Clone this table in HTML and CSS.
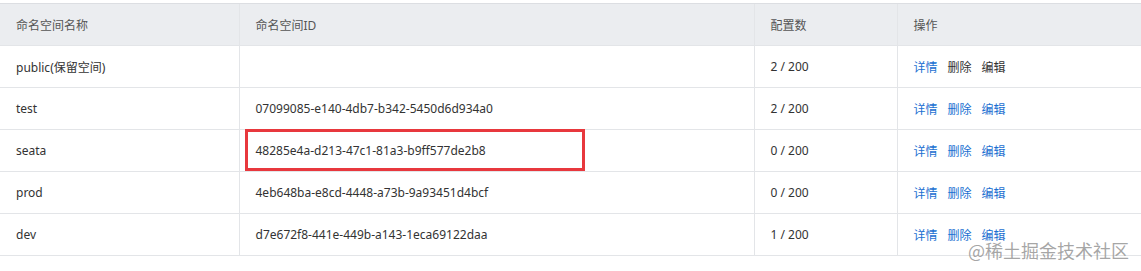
FILE: index.html
```html
<!DOCTYPE html>
<html lang="zh-CN">
<head>
<meta charset="utf-8">
<title>命名空间</title>
<link rel="stylesheet" href="styles.css">
</head>
<body>
<div class="page">
  <table class="ns-table">
    <colgroup>
      <col class="c-name">
      <col class="c-id">
      <col class="c-count">
      <col class="c-ops">
    </colgroup>
    <thead>
      <tr>
        <th>命名空间名称</th>
        <th>命名空间ID</th>
        <th>配置数</th>
        <th>操作</th>
      </tr>
    </thead>
    <tbody>
      <tr>
        <td>public(保留空间)</td>
        <td></td>
        <td>2 / 200</td>
        <td class="ops"><a class="link">详情</a><a class="link muted">删除</a><a class="link muted">编辑</a></td>
      </tr>
      <tr>
        <td>test</td>
        <td>07099085-e140-4db7-b342-5450d6d934a0</td>
        <td>2 / 200</td>
        <td class="ops"><a class="link">详情</a><a class="link">删除</a><a class="link">编辑</a></td>
      </tr>
      <tr>
        <td>seata</td>
        <td class="marked">48285e4a-d213-47c1-81a3-b9ff577de2b8<span class="mark-box"></span></td>
        <td>0 / 200</td>
        <td class="ops"><a class="link">详情</a><a class="link">删除</a><a class="link">编辑</a></td>
      </tr>
      <tr>
        <td>prod</td>
        <td>4eb648ba-e8cd-4448-a73b-9a93451d4bcf</td>
        <td>0 / 200</td>
        <td class="ops"><a class="link">详情</a><a class="link">删除</a><a class="link">编辑</a></td>
      </tr>
      <tr>
        <td>dev</td>
        <td>d7e672f8-441e-449b-a143-1eca69122daa</td>
        <td>1 / 200</td>
        <td class="ops"><a class="link">详情</a><a class="link">删除</a><a class="link">编辑</a></td>
      </tr>
    </tbody>
  </table>
  <div class="watermark">@稀土掘金技术社区</div>
</div>
</body>
</html>
```
FILE: styles.css
```css
html, body {
  margin: 0;
  padding: 0;
  background: #ffffff;
}
.page {
  position: relative;
  width: 1141px;
  height: 271px;
  padding-top: 3px;
  box-sizing: border-box;
  font-family: "Noto Sans", "Noto Sans CJK SC", sans-serif;
  font-size: 12px;
  color: #333333;
}
.ns-table {
  width: 1141px;
  border-collapse: collapse;
  table-layout: fixed;
}
.c-name { width: 239px; }
.c-id { width: 515px; }
.c-count { width: 143px; }
.c-ops { width: 244px; }
.ns-table th,
.ns-table td {
  height: 42px;
  padding: 0 15px 0 16px;
  text-align: left;
  font-weight: normal;
  border-top: 1px solid #e3e5e8;
  border-bottom: 1px solid #e3e5e8;
  border-left: 1px solid #e3e5e8;
  white-space: nowrap;
  box-sizing: border-box;
}
.ns-table th:first-child,
.ns-table td:first-child {
  border-left: none;
  padding-left: 16px;
}
.ns-table th {
  background: #ebedf0;
  color: #555555;
  border-top-color: #dcdee2;
}
.ops .link {
  margin-right: 10px;
}
.link {
  color: #1a6fd1;
  cursor: pointer;
}
.link.muted {
  color: #333333;
}
.marked {
  position: relative;
}
.mark-box {
  position: absolute;
  left: 5px;
  top: -1px;
  width: 340px;
  height: 42px;
  border: 3px solid #e8383d;
  box-sizing: border-box;
}
.watermark {
  position: absolute;
  right: 12px;
  bottom: 8px;
  font-family: "Noto Sans CJK SC", sans-serif;
  font-size: 18px;
  color: rgba(150, 150, 150, 0.85);
}
```
